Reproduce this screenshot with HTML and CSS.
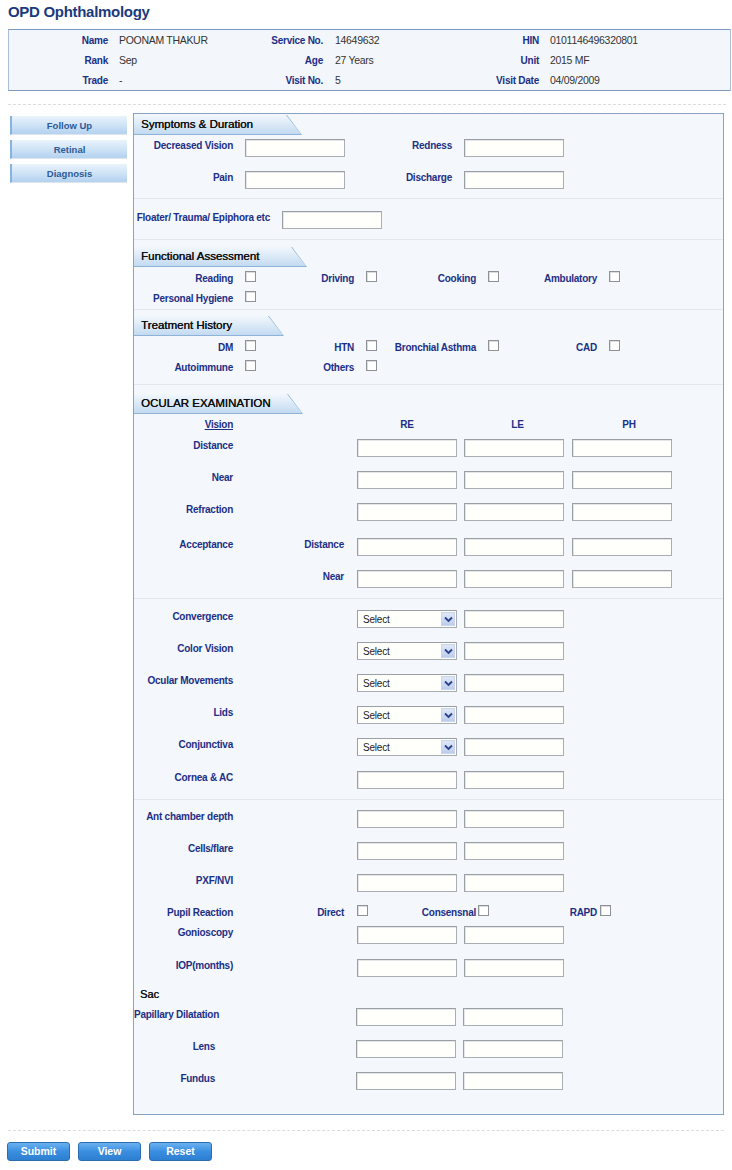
FILE: index.html
```html
<!DOCTYPE html>
<html>
<head>
<meta charset="utf-8">
<title>OPD Ophthalmology</title>
<link rel="stylesheet" href="styles.css">
</head>
<body>
<h1 class="title">OPD Ophthalmology</h1>

<div class="info">
  <div class="info-grid">
    <span class="ilbl">Name</span><span class="ival v1">POONAM THAKUR</span>
    <span class="ilbl">Service No.</span><span class="ival v2">14649632</span>
    <span class="ilbl">HIN</span><span class="ival v3">0101146496320801</span>

    <span class="ilbl">Rank</span><span class="ival v1">Sep</span>
    <span class="ilbl">Age</span><span class="ival v2">27 Years</span>
    <span class="ilbl">Unit</span><span class="ival v3">2015 MF</span>

    <span class="ilbl">Trade</span><span class="ival v1">-</span>
    <span class="ilbl">Visit No.</span><span class="ival v2">5</span>
    <span class="ilbl">Visit Date</span><span class="ival v3">04/09/2009</span>
  </div>
</div>

<div class="dash dash-top"></div>

<div class="main">
  <nav class="menu">
    <a class="mitem">Follow Up</a>
    <a class="mitem">Retinal</a>
    <a class="mitem">Diagnosis</a>
  </nav>

  <form class="panel">
    <!-- Symptoms & Duration -->
    <div class="tab t-sym"><span>Symptoms &amp; Duration</span></div>
    <div class="row m4">
      <label class="lbl c1">Decreased Vision</label><input class="txt" type="text">
      <label class="lbl c107">Redness</label><input class="txt" type="text">
    </div>
    <div class="row m14">
      <label class="lbl c1">Pain</label><input class="txt" type="text">
      <label class="lbl c107">Discharge</label><input class="txt" type="text">
    </div>
    <div class="sep s9"></div>
    <div class="row m12">
      <label class="lbl c136">Floater/ Trauma/ Epiphora etc</label><input class="txt" type="text">
    </div>
    <div class="sep s10"></div>

    <!-- Functional Assessment -->
    <div class="tab t-fun m7"><span>Functional Assessment</span></div>
    <div class="crow m4">
      <label class="lbl c1">Reading</label><input class="cb" type="checkbox">
      <label class="lbl c97">Driving</label><input class="cb" type="checkbox">
      <label class="lbl c98">Cooking</label><input class="cb" type="checkbox">
      <label class="lbl c97">Ambulatory</label><input class="cb" type="checkbox">
    </div>
    <div class="crow m4">
      <label class="lbl c1">Personal Hygiene</label><input class="cb" type="checkbox">
    </div>
    <div class="sep s2"></div>

    <!-- Treatment History -->
    <div class="tab t-tre m6"><span>Treatment History</span></div>
    <div class="crow m4">
      <label class="lbl c1">DM</label><input class="cb" type="checkbox">
      <label class="lbl c97">HTN</label><input class="cb" type="checkbox">
      <label class="lbl c98">Bronchial Asthma</label><input class="cb" type="checkbox">
      <label class="lbl c97">CAD</label><input class="cb" type="checkbox">
    </div>
    <div class="crow m4">
      <label class="lbl c1">Autoimmune</label><input class="cb" type="checkbox">
      <label class="lbl c97">Others</label><input class="cb" type="checkbox">
    </div>
    <div class="sep s8"></div>

    <!-- Ocular Examination -->
    <div class="tab t-ocu m9"><span>OCULAR EXAMINATION</span></div>
    <div class="hrow m4">
      <span class="lbl c1 ul">Vision</span><span class="sub"></span>
      <span class="lbl hd h1c">RE</span><span class="lbl hd h2c">LE</span><span class="lbl hd h3c">PH</span>
    </div>
    <div class="row m7">
      <label class="lbl c1">Distance</label><span class="lbl sub"></span>
      <input class="txt g7" type="text"><input class="txt g8" type="text"><input class="txt" type="text">
    </div>
    <div class="row m14">
      <label class="lbl c1">Near</label><span class="lbl sub"></span>
      <input class="txt g7" type="text"><input class="txt g8" type="text"><input class="txt" type="text">
    </div>
    <div class="row m14">
      <label class="lbl c1">Refraction</label><span class="lbl sub"></span>
      <input class="txt g7" type="text"><input class="txt g8" type="text"><input class="txt" type="text">
    </div>
    <div class="row m17">
      <label class="lbl c1">Acceptance</label><span class="lbl sub">Distance</span>
      <input class="txt g7" type="text"><input class="txt g8" type="text"><input class="txt" type="text">
    </div>
    <div class="row m14">
      <span class="lbl c1"></span><span class="lbl sub">Near</span>
      <input class="txt g7" type="text"><input class="txt g8" type="text"><input class="txt" type="text">
    </div>
    <div class="sep s10"></div>

    <div class="row m11">
      <label class="lbl c1">Convergence</label><span class="lbl sub"></span>
      <div class="sel g7"><span>Select</span><i class="arr"><svg width="9" height="7" viewBox="0 0 9 7"><path d="M1 1.5 L4.5 5 L8 1.5" fill="none" stroke="#2b3f8f" stroke-width="1.8"/></svg></i></div><input class="txt" type="text">
    </div>
    <div class="row m14">
      <label class="lbl c1">Color Vision</label><span class="lbl sub"></span>
      <div class="sel g7"><span>Select</span><i class="arr"><svg width="9" height="7" viewBox="0 0 9 7"><path d="M1 1.5 L4.5 5 L8 1.5" fill="none" stroke="#2b3f8f" stroke-width="1.8"/></svg></i></div><input class="txt" type="text">
    </div>
    <div class="row m14">
      <label class="lbl c1">Ocular Movements</label><span class="lbl sub"></span>
      <div class="sel g7"><span>Select</span><i class="arr"><svg width="9" height="7" viewBox="0 0 9 7"><path d="M1 1.5 L4.5 5 L8 1.5" fill="none" stroke="#2b3f8f" stroke-width="1.8"/></svg></i></div><input class="txt" type="text">
    </div>
    <div class="row m14">
      <label class="lbl c1">Lids</label><span class="lbl sub"></span>
      <div class="sel g7"><span>Select</span><i class="arr"><svg width="9" height="7" viewBox="0 0 9 7"><path d="M1 1.5 L4.5 5 L8 1.5" fill="none" stroke="#2b3f8f" stroke-width="1.8"/></svg></i></div><input class="txt" type="text">
    </div>
    <div class="row m14">
      <label class="lbl c1">Conjunctiva</label><span class="lbl sub"></span>
      <div class="sel g7"><span>Select</span><i class="arr"><svg width="9" height="7" viewBox="0 0 9 7"><path d="M1 1.5 L4.5 5 L8 1.5" fill="none" stroke="#2b3f8f" stroke-width="1.8"/></svg></i></div><input class="txt" type="text">
    </div>
    <div class="row m15">
      <label class="lbl c1">Cornea &amp; AC</label><span class="lbl sub"></span>
      <input class="txt g7" type="text"><input class="txt" type="text">
    </div>
    <div class="sep s10"></div>

    <div class="row m10">
      <label class="lbl c1">Ant chamber depth</label><span class="lbl sub"></span>
      <input class="txt g7" type="text"><input class="txt" type="text">
    </div>
    <div class="row m14">
      <label class="lbl c1">Cells/flare</label><span class="lbl sub"></span>
      <input class="txt g7" type="text"><input class="txt" type="text">
    </div>
    <div class="row m14">
      <label class="lbl c1">PXF/NVI</label><span class="lbl sub"></span>
      <input class="txt g7" type="text"><input class="txt" type="text">
    </div>
    <div class="crow m13">
      <label class="lbl c1">Pupil Reaction</label><label class="lbl sub">Direct</label><input class="cb" type="checkbox">
      <label class="lbl c107n">Consensnal</label><input class="cb" type="checkbox">
      <label class="lbl c107r">RAPD</label><input class="cb" type="checkbox">
    </div>
    <div class="row m5">
      <label class="lbl c1">Gonioscopy</label><span class="lbl sub"></span>
      <input class="txt g7" type="text"><input class="txt" type="text">
    </div>
    <div class="row m15">
      <label class="lbl c1">IOP(months)</label><span class="lbl sub"></span>
      <input class="txt g7" type="text"><input class="txt" type="text">
    </div>

    <div class="sac m9">Sac</div>
    <div class="row m6">
      <label class="lbl c81">Papillary Dilatation</label>
      <input class="txt g7" type="text"><input class="txt" type="text">
    </div>
    <div class="row m14">
      <label class="lbl c81">Lens</label>
      <input class="txt g7" type="text"><input class="txt" type="text">
    </div>
    <div class="row m14">
      <label class="lbl c81">Fundus</label>
      <input class="txt g7" type="text"><input class="txt" type="text">
    </div>
  </form>
</div>

<div class="dash dash-bottom"></div>

<div class="actions">
  <button class="btn" type="button">Submit</button>
  <button class="btn" type="button">View</button>
  <button class="btn" type="button">Reset</button>
</div>
</body>
</html>
```

FILE: styles.css
```css
* { box-sizing: border-box; }

html, body {
  margin: 0;
  padding: 0;
  background: #ffffff;
  width: 732px;
}

body {
  font-family: "Liberation Sans", Arial, sans-serif;
  color: #222;
}

.title {
  margin: 0;
  padding: 3px 0 0 8px;
  height: 29px;
  font-weight: bold;
  font-size: 15px;
  line-height: 17px;
  letter-spacing: -0.3px;
  color: #1a3a7e;
}

/* patient info */
.info {
  margin: 0 1px 0 8px;
  background: #f3f7fc;
  border-top: 1px solid #7b99c4;
  border-bottom: 1px solid #7f99bd;
  border-left: 1px solid #a9bfdc;
  border-right: 1px solid #a9bfdc;
}

.info-grid {
  display: grid;
  grid-template-columns: 99px 142px 73px 144px 72px 1fr;
  grid-auto-rows: 20px;
  align-items: center;
}

.ilbl {
  font-weight: bold;
  font-size: 10px;
  letter-spacing: -0.25px;
  color: #1c2f85;
  text-align: right;
  white-space: nowrap;
}

.ival {
  font-size: 10.5px;
  letter-spacing: -0.3px;
  color: #333;
  white-space: nowrap;
}
.v1 { padding-left: 11px; }
.v2 { padding-left: 12px; }
.v3 { padding-left: 11px; }

.dash {
  height: 0;
  border-top: 1px dashed #dcdcdc;
}
.dash-top { margin: 13px 6px 8px 8px; }
.dash-bottom { margin: 15px 8px 11px 8px; }

/* main area */
.main {
  display: flex;
  align-items: flex-start;
  gap: 6px;
  margin-left: 10px;
}

.menu {
  width: 117px;
  flex: none;
  margin-top: 3px;
  display: flex;
  flex-direction: column;
  gap: 5px;
}

.mitem {
  display: block;
  height: 19px;
  line-height: 19px;
  text-align: center;
  font-weight: bold;
  font-size: 9.5px;
  color: #2d5a98;
  background: linear-gradient(to bottom, #eaf3fc 0%, #d2e5f7 45%, #b3d1ef 100%);
  border-left: 2px solid #86b3e0;
  border-bottom: 1px solid #e0e6ee;
}

.panel {
  width: 591px;
  flex: none;
  margin: 0;
  background: #f4f8fd;
  border: 1px solid #86a3c3;
  padding-bottom: 24px;
}

/* section tabs */
.tab {
  height: 20px;
  background: #8fb2d8;
  clip-path: polygon(0 0, calc(100% - 15px) 0, 100% 100%, 0 100%);
}
.tab span {
  display: block;
  height: 19px;
  margin: 1px 1px 0 0;
  padding-left: 7px;
  line-height: 19px;
  font-size: 11.5px;
  color: #0d0d0d;
  text-shadow: 0.35px 0 0 #0d0d0d;
  white-space: nowrap;
  background: linear-gradient(to bottom, #f2f7fd 0%, #dbe9f7 50%, #c3daf1 100%);
  clip-path: polygon(0 0, calc(100% - 15px) 0, 100% 100%, 0 100%);
}
.t-sym { width: 168px; }
.t-fun { width: 173px; }
.t-tre { width: 150px; }
.t-ocu { width: 169px; }

.sep {
  height: 1px;
  background: #e0e7ef;
}

/* vertical spacing helpers */
.m4 { margin-top: 4px; }
.m5 { margin-top: 5px; }
.m6 { margin-top: 6px; }
.m7 { margin-top: 7px; }
.m9 { margin-top: 9px; }
.m10 { margin-top: 10px; }
.m11 { margin-top: 11px; }
.m12 { margin-top: 12px; }
.m13 { margin-top: 13px; }
.m14 { margin-top: 14px; }
.m15 { margin-top: 15px; }
.m17 { margin-top: 17px; }
.s2 { margin-top: 2px; }
.s8 { margin-top: 8px; }
.s9 { margin-top: 9px; }
.s10 { margin-top: 10px; }

/* rows */
.row {
  display: flex;
  align-items: flex-start;
  height: 18px;
}
.crow {
  display: flex;
  align-items: flex-start;
  height: 16px;
}
.hrow {
  display: flex;
  align-items: flex-start;
  height: 14px;
}

.lbl {
  flex: none;
  display: block;
  font-weight: bold;
  font-size: 10px;
  letter-spacing: -0.25px;
  line-height: 14px;
  color: #1c2f85;
  text-align: right;
  white-space: nowrap;
}
.crow .lbl { line-height: 16px; }

.c1 { width: 99px; margin-right: 12px; }
.c107 { width: 107px; margin-right: 12px; }
.c136 { width: 136px; margin-right: 12px; }
.c97 { width: 97px; margin-right: 12px; }
.c98 { width: 98px; margin-right: 12px; }
.c81 { width: 81px; margin-right: 141px; }
.sub { width: 99px; margin-right: 13px; }
.c107n { width: 107px; margin-right: 2px; }
.c107r { width: 107px; margin-right: 3px; }

.ul { text-decoration: underline; }

.hd { text-align: center; }
.h1c { width: 100px; margin-right: 7px; }
.h2c { width: 107px; }
.h3c { width: 116px; }

.txt {
  flex: none;
  display: block;
  width: 100px;
  height: 18px;
  margin: 0;
  padding: 0 2px;
  background: #fffffc;
  border: 1px solid #a9aeb4;
  border-top-color: #9a9fa5;
  border-left-color: #9a9fa5;
  box-shadow: inset 1px 1px 0 #e4e6e8;
  font-size: 11px;
}
.g7 { margin-right: 7px; }
.g8 { margin-right: 8px; }

.cb {
  -webkit-appearance: none;
  appearance: none;
  flex: none;
  display: block;
  width: 11px;
  height: 11px;
  margin: 0 1px 0 0;
  background: #ffffff;
  border: 1px solid #8e9196;
  box-shadow: inset 1px 1px 0 #dcdde0;
}

.sel {
  flex: none;
  display: flex;
  align-items: center;
  width: 100px;
  height: 18px;
  background: #fffffc;
  border: 1px solid #a9aeb4;
  border-top-color: #9a9fa5;
  border-left-color: #9a9fa5;
  padding: 0 1px 0 5px;
}
.sel span {
  flex: 1;
  font-size: 10px;
  letter-spacing: -0.2px;
  color: #222;
}
.arr {
  flex: none;
  width: 14px;
  height: 14px;
  display: flex;
  align-items: center;
  justify-content: center;
  background: linear-gradient(to bottom, #dfe8f7, #bccdec);
  border: 1px solid #c9d5ea;
}
.arr svg { display: block; }

.sac {
  height: 16px;
  line-height: 16px;
  padding-left: 6px;
  font-size: 11px;
  color: #111;
  text-shadow: 0.35px 0 0 #111;
}

/* buttons */
.actions {
  display: flex;
  gap: 8px;
  margin-left: 7px;
}
.btn {
  width: 63px;
  height: 19px;
  margin: 0;
  padding: 0;
  border: 1px solid #2c6cb0;
  border-radius: 3px;
  background: linear-gradient(to bottom, #6ab2f0 0%, #3a8ee0 50%, #2d7fd0 100%);
  color: #ffffff;
  font-family: "Liberation Sans", Arial, sans-serif;
  font-weight: bold;
  font-size: 10.5px;
  line-height: 17px;
}
```
